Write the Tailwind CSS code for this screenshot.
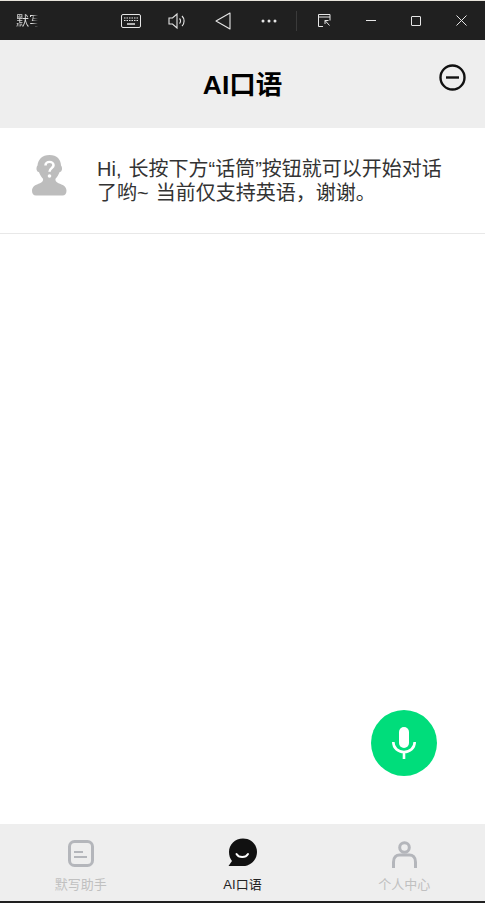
<!DOCTYPE html>
<html lang="zh-CN">
<head>
    <meta charset="UTF-8">
    <meta name="viewport" content="width=device-width, initial-scale=1.0">
    <title>AI口语</title>
    <script src="https://cdn.jsdelivr.net/npm/@tailwindcss/browser@4"></script>
</head>
<body class="bg-white font-['Liberation_Sans','Noto_Sans_CJK_SC',sans-serif] overflow-hidden">
    <div class="relative flex flex-col h-[903px] w-[485px]">
        <!-- Window title bar -->
        <div class="flex items-center h-10 shrink-0 bg-[#202020] border-t border-[#e8e4dc] text-white">
            <div class="w-[116px] pl-4 text-[13px] whitespace-nowrap"><span class="inline-block bg-linear-to-r from-[#e0e0e0] from-60% to-transparent to-85% bg-clip-text text-transparent">默写</span></div>
            <svg class="ml-[5px] w-5 h-[14px]" viewBox="0 0 20 14" fill="none" stroke="#e6e6e6" stroke-width="1"><rect x=".5" y=".5" width="19" height="13" rx="1.5"/><path d="M3 4h14M3 6.500h14" stroke-dasharray="1.500 1"/><path d="M6 10h8" stroke-width="1.500"/></svg>
            <svg class="ml-[27px] w-[19px] h-[18px]" viewBox="0 0 19 18" fill="none" stroke="#e6e6e6" stroke-width="1.100"><path d="M1 6h3.500L9 2v14l-4.500-4H1z"/><path d="M11.500 6.500a3.500 3.500 0 0 1 0 5M14 4a7 7 0 0 1 0 10"/></svg>
            <svg class="ml-[28px] w-[16px] h-[18px]" viewBox="0 0 16 18" fill="none" stroke="#e6e6e6" stroke-width="1.100"><path d="M15 1v16L1 9z" stroke-linejoin="round"/></svg>
            <svg class="ml-[30px] w-[16px] h-[4px]" viewBox="0 0 16 4" fill="#e6e6e6"><circle cx="2" cy="2" r="1.500"/><circle cx="8" cy="2" r="1.500"/><circle cx="14" cy="2" r="1.500"/></svg>
            <div class="ml-[19px] w-px h-5 bg-[#3a3a3a]"></div>
            <svg class="ml-[21px] w-[13px] h-[13px]" viewBox="0 0 13 13" fill="none" stroke="#e6e6e6" stroke-width="1"><path d="M5 12.500H.5V.5h11.500v6M.5 3h11.500"/><path d="M7 6.500l4.500 5M7 6.500v3.500M7 6.500h3.500"/></svg>
            <div class="ml-[35px] w-[10px] h-px bg-[#e6e6e6]"></div>
            <div class="ml-[35px] w-[10px] h-[10px] border border-[#e6e6e6] rounded-[1px]"></div>
            <svg class="ml-[35px] w-[11px] h-[11px]" viewBox="0 0 11 11" fill="none" stroke="#e6e6e6" stroke-width="1"><path d="M.5.500l10 10M10.500.500l-10 10"/></svg>
        </div>

        <!-- Page header -->
        <header class="relative flex items-center justify-center h-[88px] shrink-0 bg-[#eeeeee]">
            <h1 class="text-[26.500px] font-bold text-black mt-[3px]">AI口语</h1>
            <svg class="absolute top-[24px] left-[439px] w-[27px] h-[27px]" viewBox="0 0 27 27" fill="none" stroke="#111" stroke-width="2.400"><circle cx="13.500" cy="13.500" r="12"/><path d="M7 13.500h13"/></svg>
        </header>

        <!-- Chat message -->
        <div class="flex items-center h-[106px] shrink-0 border-b border-[#e8e8e8] pl-[32px] pr-[40px]">
            <svg class="w-[35px] h-[42px] shrink-0 mb-[9px]" viewBox="0 0 35 44" preserveAspectRatio="none">
                <path fill="#bdbdbd" d="M17.500 0C25 0 29 5 29 11c1 1 1.500 4 .5 5.500-.5 1-1.500 1.500-2 1.500-1 3-3 5.500-4 7-.5 2 .5 3.500 3 4.500 4 1.500 8 3 8 8 0 3-1.500 5-4 5H4c-2.500 0-4-2-4-5 0-5 4-6.500 8-8 2.500-1 3.500-2.500 3-4.500-1-1.500-3-4-4-7-.5 0-1.500-.5-2-1.500C4 15 4.500 12 5.500 11 6 5 10 0 17.500 0z"/>
                <path fill="none" stroke="#fff" stroke-width="2.600" d="M13.500 11c0-2.200 1.800-3.800 4-3.800s4 1.600 4 3.600c0 3-4 3-4 6.700"/>
                <circle cx="17.500" cy="22" r="1.800" fill="#fff"/>
            </svg>
            <p class="ml-[30px] text-[20px] leading-[24px] [word-spacing:1.500px] text-[#333333]">Hi, 长按下方“话筒”按钮就可以开始对话了哟~ 当前仅支持英语，谢谢。</p>
        </div>

        <div class="flex-1"></div>

        <!-- Tab bar -->
        <nav class="grid grid-cols-3 h-[77px] shrink-0 bg-[#eeeeee] text-[13px] text-[#c0c0c0]">
            <div class="flex flex-col items-center pt-[16px]">
                <svg class="w-[26px] h-[27px]" viewBox="0 0 26 27" fill="none" stroke="#b4b6bb" stroke-width="3"><rect x="1.500" y="1.500" width="23" height="24" rx="5"/><path d="M6 12h9M6 17h13" stroke-width="2.200"/></svg>
                <span class="mt-[8px]">默写助手</span>
            </div>
            <div class="flex flex-col items-center pt-[14px] text-[#222222]">
                <svg class="w-[29px] h-[29px]" viewBox="0 0 29 29"><path fill="#111" d="M15 .5C23 .5 29 6.500 29 14S23 28 15 28H.5l3.500-5C2 20.500 1 17.500 1 14 1 6.500 7 .5 15 .5z"/><path fill="none" stroke="#fff" stroke-width="2" stroke-linecap="round" d="M8.500 16c2.300 4 9.200 4 11.500 0"/></svg>
                <span class="mt-[8px]">AI口语</span>
            </div>
            <div class="flex flex-col items-center pt-[17px]">
                <svg class="w-[25px] h-[27px]" viewBox="0 0 25 27" fill="none" stroke="#b4b6bb" stroke-width="3"><circle cx="12.500" cy="6.500" r="4.800"/><path d="M1.500 27v-6c0-5 3-7 6-7h10c3 0 6 2 6 7v6"/></svg>
                <span class="mt-[7px]">个人中心</span>
            </div>
        </nav>
        <div class="h-[2px] shrink-0 bg-[#202020]"></div>

        <!-- Record button -->
        <button class="absolute top-[710px] left-[371px] flex items-center justify-center w-[66px] h-[66px] rounded-full bg-[#00dd7b]">
            <svg class="w-[24px] h-[32px]" viewBox="0 0 24 32" fill="none" stroke="#fff"><rect x="7" y="0" width="10" height="21" rx="5" fill="#fff" stroke="none"/><path stroke-width="2.600" d="M1.300 15c0 6 4.700 10 10.700 10s10.700-4 10.700-10M12 25v7"/></svg>
        </button>
    </div>
</body>
</html>
